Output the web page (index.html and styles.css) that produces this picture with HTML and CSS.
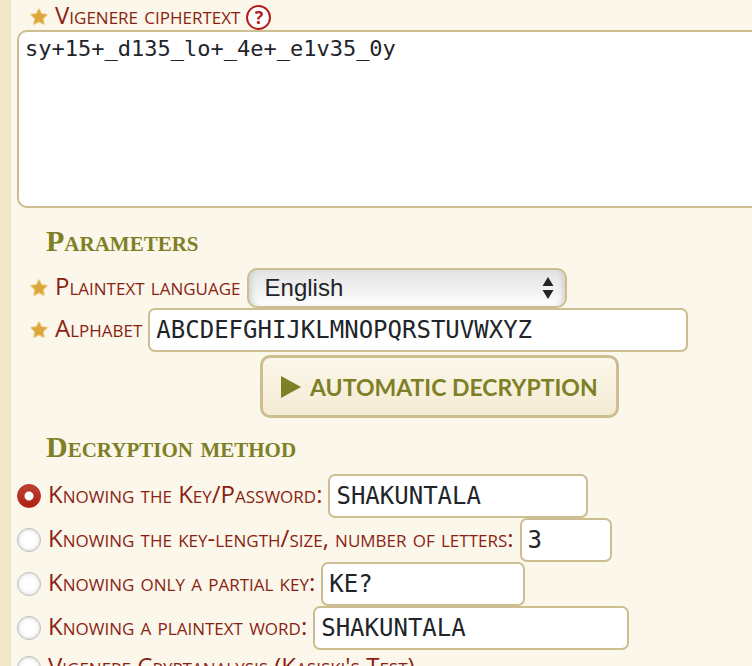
FILE: index.html
```
<!DOCTYPE html>
<html lang="en">
<head>
<meta charset="utf-8">
<title>Vigenere Decoder</title>
<link rel="stylesheet" href="styles.css">
</head>
<body>
<svg class="symbols" aria-hidden="true">
  <symbol id="star" viewBox="0 0 18 18">
    <path d="M9 2.2 11 6.4 15.8 7 12.3 10.3 13.2 15 9 12.8 4.8 15 5.7 10.3 2.2 7 7 6.4Z" fill="#dca63a" stroke="#edcb80" stroke-width="2" stroke-linejoin="round" paint-order="stroke"/>
  </symbol>
</svg>
<main class="panel">
  <form class="form">
    <div class="row row-first">
      <svg class="star" aria-hidden="true"><use href="#star"/></svg>
      <label for="cipher">Vigenere ciphertext</label>
      <button class="help" type="button">?</button>
    </div>
    <textarea id="cipher" class="field cipher" spellcheck="false">sy+15+_d135_lo+_4e+_e1v35_0y</textarea>

    <h3>Parameters</h3>
    <div class="row row-select">
      <svg class="star" aria-hidden="true"><use href="#star"/></svg>
      <label for="language">Plaintext language</label>
      <span class="select-wrap">
        <select id="language"><option>English</option></select>
        <svg class="arrows" viewBox="0 0 12 24" aria-hidden="true"><path d="M6 1 11.5 10H.5ZM6 23 .5 14h11Z" fill="#212529"/></svg>
      </span>
    </div>
    <div class="row">
      <svg class="star" aria-hidden="true"><use href="#star"/></svg>
      <label for="alphabet">Alphabet</label>
      <input id="alphabet" class="field w-full" type="text" value="ABCDEFGHIJKLMNOPQRSTUVWXYZ">
    </div>
    <button class="submit" type="button"><svg class="play" viewBox="0 0 20 22" aria-hidden="true"><path d="M0 0 20 11 0 22Z" fill="#7f7f26"/></svg>AUTOMATIC DECRYPTION</button>

    <h3>Decryption method</h3>
    <div class="row">
      <input id="m-key" type="radio" name="method" checked>
      <label for="m-key">Knowing the Key/Password:</label>
      <input class="field w-key" type="text" value="SHAKUNTALA" aria-label="Key">
    </div>
    <div class="row">
      <input id="m-length" type="radio" name="method">
      <label for="m-length">Knowing the key-length/size, number of letters:</label>
      <input class="field w-length" type="text" value="3" aria-label="Key length">
    </div>
    <div class="row">
      <input id="m-partial" type="radio" name="method">
      <label for="m-partial">Knowing only a partial key:</label>
      <input class="field w-partial" type="text" value="KE?" aria-label="Partial key">
    </div>
    <div class="row">
      <input id="m-word" type="radio" name="method">
      <label for="m-word">Knowing a plaintext word:</label>
      <input class="field w-word" type="text" value="SHAKUNTALA" aria-label="Plaintext word">
    </div>
    <div class="row row-plain">
      <input id="m-kasiski" type="radio" name="method">
      <label for="m-kasiski">Vigenere Cryptanalysis (Kasiski's Test)</label>
    </div>
  </form>
</main>
</body>
</html>
```
FILE: styles.css
```
* { box-sizing: border-box; }
html { overflow: hidden; background: #f3e6ca; }
body { margin: 0; padding-left: 9px; color: #212529; }
.symbols { display: none; }
.panel {
  min-height: 100vh;
  padding-left: 6px;
  border-left: 2px solid #ece2c6;
  background: #fbf7ea;
}
.form { margin: 0; }
.row { display: flex; align-items: center; height: 44px; }
.row-first { height: 30px; padding-top: 4px; }
.row-select { height: 40px; }
.row-plain { height: 36px; }
.star { flex: none; width: 20px; height: 20px; margin: 0 6px 0 12px; }
label {
  color: #8b1f14;
  font: 24px/28px "Open Sans", sans-serif;
  font-variant: small-caps;
  white-space: nowrap;
  margin-right: 6px;
  padding-bottom: 4px;
}
.help {
  width: 25px;
  height: 25px;
  padding: 0;
  border: 2px solid #b01e1a;
  border-radius: 50%;
  background: #fff;
  color: #b01e1a;
  font: bold 18px/20px "Open Sans", sans-serif;
}
.field {
  height: 44px;
  padding: 0 6px;
  border: 2px solid #cdbe91;
  border-radius: 7px;
  background: #fff;
  color: #212529;
  font: 24px "DejaVu Sans Mono", monospace;
}
.cipher {
  display: block;
  width: calc(100% + 20px);
  height: 178px;
  margin-bottom: 4px;
  padding: 4px 6px;
  border-radius: 10px;
  font-size: 22px;
  resize: none;
}
.w-full { width: 540px; }
.w-key { width: 260px; }
.w-length { width: 92px; }
.w-partial { width: 204px; }
.w-word { width: 316px; }
h3 {
  margin: 0 0 0 29px;
  padding: 11px 0 9px;
  color: #7f7f26;
  font: bold 30px/36px "Liberation Serif", serif;
  font-variant: small-caps;
}
.select-wrap { position: relative; width: 320px; }
select {
  display: block;
  width: 100%;
  height: 40px;
  padding: 0 16px 2px;
  border: 2px solid #cdbe91;
  border-radius: 10px;
  appearance: none;
  background: linear-gradient(#e4e4e4, #f0f0f0 50%, #fff);
  box-shadow: inset 6px 0 6px -4px #ccc, inset -6px 0 6px -4px #ccc;
  color: #212529;
  font: 24px "Liberation Sans", sans-serif;
}
.arrows { position: absolute; right: 13px; top: 8px; width: 12px; height: 24px; pointer-events: none; }
.submit {
  display: flex;
  align-items: center;
  gap: 9px;
  height: 63px;
  margin: 3px 0 0 243px;
  padding: 0 18px;
  border: 3px solid #cdbe91;
  border-radius: 10px;
  background: linear-gradient(#fbf7ea, #f4ebd3);
  color: #7f7f26;
  font: bold 23px Lato, sans-serif;
}
.play { width: 20px; height: 22px; }
input[type="radio"] {
  flex: none;
  appearance: none;
  width: 24px;
  height: 24px;
  margin: 0 7px 0 0;
  border: 1px solid #bcbcbc;
  border-radius: 50%;
  background: #fff;
  box-shadow: inset 0 0 4px #ccc;
}
input[type="radio"]:checked {
  border-color: #b52b20;
  background: radial-gradient(circle, #fff 4px, transparent 5px), linear-gradient(#be4436, #ae2014);
  box-shadow: none;
}
```
